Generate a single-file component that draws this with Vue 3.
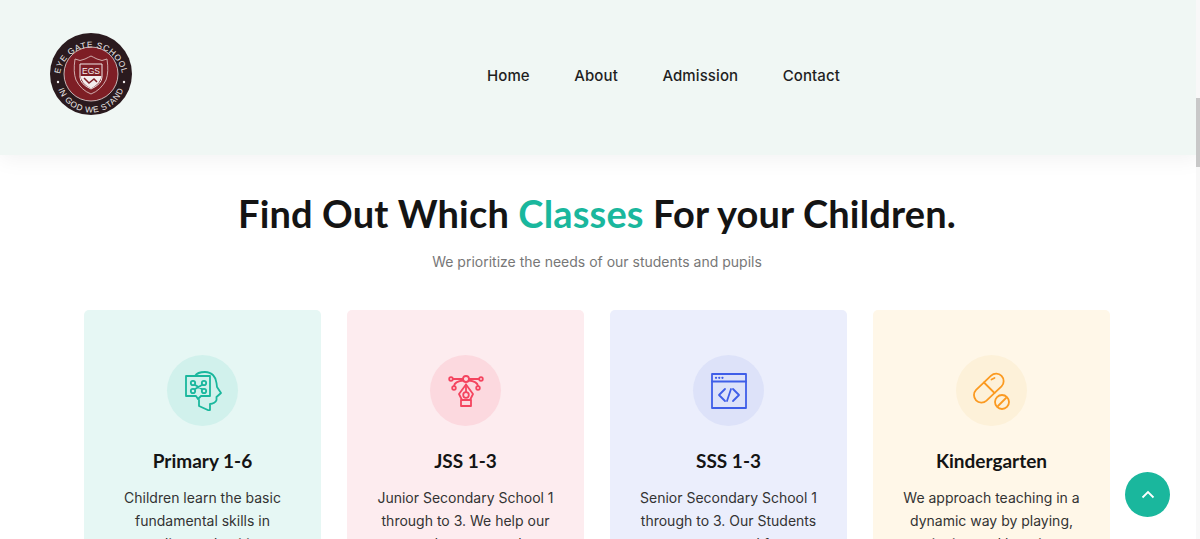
<template>
  <div class="page">
    <!-- header -->
    <header class="site-header">
      <div class="logo">
        <svg width="84" height="84" viewBox="0 0 84 84">
          <defs>
            <path id="arcTop" d="M10.500 47 A31.500 31.500 0 1 1 73.500 47" />
            <path id="arcBottom" d="M7.500 46 A34.500 34.500 0 0 0 76.500 46" />
          </defs>
          <circle cx="42" cy="42" r="41" fill="#2a1a1e" />
          <circle cx="42" cy="42" r="27" fill="#7e1e25" stroke="#e6dcdc" stroke-width="0.800" />
          <text class="logo-ring" fill="#f0ecec"><textPath href="#arcTop" startOffset="50%" text-anchor="middle">EYE GATE SCHOOL</textPath></text>
          <text class="logo-ring" fill="#f0ecec"><textPath href="#arcBottom" startOffset="50%" text-anchor="middle">IN GOD WE STAND</textPath></text>
          <circle cx="9" cy="50" r="1.200" fill="#f0ecec" />
          <circle cx="75" cy="50" r="1.200" fill="#f0ecec" />
          <path d="M26 27 Q31 30 36 27 Q40 25 42 24 Q44 25 48 27 Q53 30 58 27 Q60 40 57 48 Q52 58 42 62 Q32 58 27 48 Q24 40 26 27Z" fill="none" stroke="#d9bcbc" stroke-width="0.900" />
          <path d="M31 32 H53 V45 Q53 52 42 57 Q31 52 31 45Z" fill="#7e1e25" stroke="#f0e8e8" stroke-width="1" />
          <path d="M31.500 44 H52.500 Q52 51 42 56.500 Q32 51 31.500 44Z" fill="#f3eeee" />
          <path d="M35 46 L40 51 L45 47 L48 50" fill="none" stroke="#7e1e25" stroke-width="1.500" />
          <text x="42" y="42" text-anchor="middle" class="logo-mono" fill="#f3eeee">EGS</text>
        </svg>
      </div>
      <nav class="main-nav">
        <a v-for="link in links" :key="link" href="#">{{ link }}</a>
      </nav>
    </header>

    <!-- classes -->
    <section class="classes">
      <h2>Find Out Which <span>Classes</span> For your Children.</h2>
      <p class="lead">We prioritize the needs of our students and pupils</p>

      <div class="card-row">
        <div class="card card-green">
          <div class="icon-wrap">
            <svg width="40" height="40" viewBox="0 0 40 40" fill="none" stroke="currentColor" stroke-width="1.800" stroke-linecap="round" stroke-linejoin="round">
              <path d="M12 5 C14 1.500 18 1 22 1 C29 1 33 6 33.500 12 L34 16 L38 22 L33.500 26 V29 C33 31 30 33 27 33 V39 L26 39.500 L16 35 V29" />
              <path d="M3 5 H27 V25 H18 L15 28 L13 25 H3 Z" />
              <circle cx="10" cy="12" r="2.200" />
              <circle cx="21" cy="12" r="2.200" />
              <circle cx="10" cy="20" r="2.200" />
              <circle cx="21" cy="20" r="2.200" />
              <path d="M11.700 13.700 L19.300 18.300 M19.300 13.700 L11.700 18.300" />
            </svg>
          </div>
          <h3>Primary 1-6</h3>
          <p>Children learn the basic fundamental skills in reading and writing</p>
        </div>

        <div class="card card-pink">
          <div class="icon-wrap">
            <svg width="40" height="40" viewBox="0 0 40 40" fill="none" stroke="currentColor" stroke-width="1.800" stroke-linecap="round" stroke-linejoin="round">
              <circle cx="5" cy="8" r="1.800" />
              <circle cx="20" cy="8" r="3" />
              <circle cx="35" cy="8" r="1.800" />
              <circle cx="8" cy="17" r="1.800" />
              <circle cx="32" cy="17" r="1.800" />
              <path d="M6.800 8 H17 M23 8 H33.200" />
              <path d="M17.500 9.500 C12 10 8.500 11.500 8 15 M22.500 9.500 C28 10 31.500 11.500 32 15" />
              <path d="M20 13.500 L13 23 L16 29 H24 L27 23 Z" />
              <path d="M20 13.500 V21" />
              <circle cx="20" cy="24" r="2.800" />
              <path d="M15 29 H25 V35 H15 Z" />
            </svg>
          </div>
          <h3>JSS 1-3</h3>
          <p>Junior Secondary School 1 through to 3. We help our students to excel</p>
        </div>

        <div class="card card-blue">
          <div class="icon-wrap">
            <svg width="36" height="36" viewBox="0 0 36 36" fill="none" stroke="currentColor" stroke-width="1.800" stroke-linecap="round" stroke-linejoin="round">
              <rect x="1" y="1" width="34" height="34" />
              <path d="M1 8.500 H35" />
              <path d="M5 4.800 H5.100 M8.200 4.800 H8.300 M11.400 4.800 H11.500" stroke-width="2.200" />
              <path d="M14 16 L8 22 L14 28 M22 16 L28 22 L22 28 M20 16 L16 28" />
            </svg>
          </div>
          <h3>SSS 1-3</h3>
          <p>Senior Secondary School 1 through to 3. Our Students are prepared for</p>
        </div>

        <div class="card card-orange">
          <div class="icon-wrap">
            <svg width="38" height="38" viewBox="0 0 38 38" fill="none" stroke="currentColor" stroke-width="1.800" stroke-linecap="round" stroke-linejoin="round">
              <path d="M3.100 17.900 L18.100 3.600 A7.500 7.500 0 0 1 28.500 14.400 L13.500 28.700 A7.500 7.500 0 0 1 3.100 17.900 Z" />
              <path d="M11 10.500 L21.500 21" />
              <path d="M18.500 7.500 L21.500 6" />
              <circle cx="29" cy="30" r="7" />
              <path d="M25 34 L33 26" />
            </svg>
          </div>
          <h3>Kindergarten</h3>
          <p>We approach teaching in a dynamic way by playing, singing and learning</p>
        </div>
      </div>
    </section>

    <!-- back to top -->
    <a class="to-top" href="#">
      <svg width="14" height="9" viewBox="0 0 14 9" fill="none" stroke="#fff" stroke-width="1.800">
        <path d="M1.500 7.500 L7 2 L12.500 7.500" />
      </svg>
    </a>

    <!-- the page scrollbar as it appears in the shot -->
    <div class="scroll-track"><div class="scroll-thumb"></div></div>
  </div>
</template>

<script setup>
const links = ["Home", "About", "Admission", "Contact"];
</script>

<style>
html,
body {
  margin: 0;
  height: 539px;
  overflow: hidden;
  background: #fff;
}
</style>

<style scoped>
.page {
  height: 539px;
  overflow: hidden;
  font-family: Inter, "Open Sans", "Liberation Sans", sans-serif;
  color: #1a1a1a;
}

.site-header {
  height: 155px;
  box-sizing: border-box;
  padding-left: 49px;
  display: flex;
  align-items: center;
  background: #f0f7f4;
  box-shadow: 0 5px 20px rgba(0, 0, 0, 0.05);
}

.logo {
  height: 84px;
  margin-top: -8px;
}

.logo-ring {
  font-family: "Liberation Sans", sans-serif;
  font-size: 8.300px;
  letter-spacing: 0.7px;
}

.logo-mono {
  font-family: "Liberation Sans", sans-serif;
  font-size: 8.500px;
}

.main-nav {
  display: flex;
  gap: 44.500px;
  margin-left: 354px;
  margin-top: -5px;
}

.main-nav a {
  color: #1f1f1f;
  text-decoration: none;
  font-size: 15px;
  font-weight: 500;
  letter-spacing: 0.1px;
}

.classes {
  text-align: center;
  padding: 36px 6px 0 0;
}

.classes h2 {
  margin: 0;
  font-family: Lato, "Liberation Sans", sans-serif;
  font-size: 38px;
  line-height: 44px;
  font-weight: 700;
  letter-spacing: 0.15px;
  color: #141414;
}

.classes h2 span {
  color: #1ab79d;
}

.lead {
  margin: 15px 0 0;
  font-size: 14px;
  line-height: 24px;
  color: #777;
}

.card-row {
  display: flex;
  justify-content: center;
  gap: 26px;
  margin-top: 36px;
}

.card {
  width: 237px;
  height: 400px;
  box-sizing: border-box;
  padding: 45px 30px 0;
  border-radius: 5px;
}

.card-green { background: #e6f7f4; color: #1ab79d; }
.card-pink { background: #fdecef; color: #f4445f; }
.card-blue { background: #ebeefc; color: #3f5ee8; }
.card-orange { background: #fff7e8; color: #fb9a21; }

.icon-wrap {
  width: 71px;
  height: 71px;
  margin: 0 auto;
  border-radius: 50%;
  display: flex;
  align-items: center;
  justify-content: center;
}

.card-green .icon-wrap { background: #d1f1ec; }
.card-pink .icon-wrap { background: #fcd9df; }
.card-blue .icon-wrap { background: #dde2f9; }
.card-orange .icon-wrap { background: #fdf1d9; }

.card h3 {
  margin: 22px 0 0;
  font-family: Lato, "Liberation Sans", sans-serif;
  font-size: 19px;
  line-height: 26px;
  font-weight: 700;
  color: #141414;
}

.card p {
  margin: 12px -2px 0;
  font-size: 14px;
  line-height: 23px;
  color: #333;
}

.to-top {
  position: fixed;
  left: 1125px;
  top: 472px;
  width: 45px;
  height: 45px;
  border-radius: 50%;
  background: #1ab79d;
  display: flex;
  align-items: center;
  justify-content: center;
}

.scroll-track {
  position: fixed;
  right: 0;
  top: 0;
  width: 4px;
  height: 539px;
  background: #f8f8f8;
}

.scroll-thumb {
  margin-top: 98px;
  height: 69px;
  background: #c8c8c8;
}
</style>
